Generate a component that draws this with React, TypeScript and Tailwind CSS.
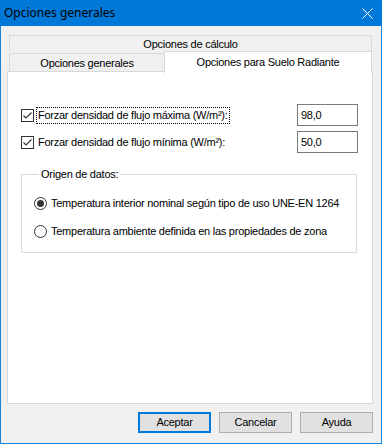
import React from "react";

const font = { fontFamily: '"Liberation Sans", Arial, sans-serif' };

function Checkbox({ checked }: { checked: boolean }) {
  return (
    <div className="w-[13px] h-[13px] border border-[#333333] bg-white flex items-center justify-center shrink-0">
      {checked && (
        <svg width="11" height="11" viewBox="0 0 11 11">
          <path d="M1.5 5.5 L4 8 L9.5 2.5" fill="none" stroke="#333333" strokeWidth="1.1" />
        </svg>
      )}
    </div>
  );
}

function Radio({ checked }: { checked: boolean }) {
  return (
    <div className="w-[13px] h-[13px] rounded-full border border-[#333333] bg-white flex items-center justify-center shrink-0">
      {checked && <div className="w-[7px] h-[7px] rounded-full bg-[#333333]" />}
    </div>
  );
}

function Btn({ label, focused }: { label: string; focused?: boolean }) {
  return (
    <div
      className={
        "w-[73px] h-[21px] bg-[#e1e1e1] flex items-center justify-center text-[11px] text-black " +
        (focused ? "border-2 border-[#0078d7]" : "border border-[#adadad]")
      }
    >
      {label}
    </div>
  );
}

export default function App() {
  return (
    <div
      className="w-[382px] h-[444px] flex flex-col border-x border-b border-[#1883d7] bg-[#f0f0f0] text-black"
      style={font}
    >
      <div className="h-[26px] bg-[#0078d7] flex items-center justify-between pl-[4px] pr-[9px] -mx-px">
        <span className="text-[12px] text-black" style={{ fontFamily: '"Noto Sans", sans-serif' }}>
          Opciones generales
        </span>
        <svg width="11" height="11" viewBox="0 0 11 11">
          <path d="M0.5 0.5 L10.5 10.5 M10.5 0.5 L0.5 10.5" stroke="white" strokeWidth="1" />
        </svg>
      </div>
      <div className="flex-1 flex flex-col pt-[9px] pl-[6px] pr-[8px] pb-[9px] text-[11px] tracking-[-0.25px]">
        <div className="ml-[2px] mr-px flex flex-col">
          <div className="h-[16px] border-t border-x border-[#d9d9d9] flex items-center justify-center pt-[1px]">
            Opciones de cálculo
          </div>
          <div className="h-[21px] flex items-end -mb-px">
            <div className="w-[155px] h-[19px] border-t border-l border-[#d9d9d9] flex items-center justify-center">
              Opciones generales
            </div>
            <div className="relative z-10 flex-1 h-[22px] -mb-px bg-white border-t border-x border-[#d9d9d9] flex items-center justify-center pb-[1px]">
              Opciones para Suelo Radiante
            </div>
          </div>
        </div>
        <div className="h-[333px] bg-white border border-[#d9d9d9] flex flex-col pt-[32px] pl-[13px] pr-[14px]">
          <div className="h-[22px] flex items-center">
            <Checkbox checked />
            <div className="ml-[2px] flex-1">
              <span className="inline-block border border-dotted border-black px-px leading-[15px]">
                Forzar densidad de flujo máxima (W/m²):
              </span>
            </div>
            <div className="w-[61px] h-[22px] border border-[#7a7a7a] bg-white flex items-center pl-[3px]">
              98,0
            </div>
          </div>
          <div className="h-[22px] flex items-center mt-[5px]">
            <Checkbox checked />
            <div className="ml-[3px] flex-1 pl-px">Forzar densidad de flujo mínima (W/m²):</div>
            <div className="w-[61px] h-[22px] border border-[#7a7a7a] bg-white flex items-center pl-[3px]">
              50,0
            </div>
          </div>
          <fieldset className="mt-[15px] w-[336px] h-[85px] border border-[#dcdcdc] pl-[12px]">
            <legend className="ml-[5px] px-[2px] leading-[13px]">Origen de datos:</legend>
            <div className="h-[22px] mt-[11px] flex items-center">
              <Radio checked />
              <span className="ml-[4px]">Temperatura interior nominal según tipo de uso UNE-EN 1264</span>
            </div>
            <div className="h-[22px] mt-[6px] flex items-center">
              <Radio checked={false} />
              <span className="ml-[4px]">Temperatura ambiente definida en las propiedades de zona</span>
            </div>
          </fieldset>
        </div>
        <div className="mt-[8px] flex justify-end gap-[8px]">
          <Btn label="Aceptar" focused />
          <Btn label="Cancelar" />
          <Btn label="Ayuda" />
        </div>
      </div>
    </div>
  );
}
